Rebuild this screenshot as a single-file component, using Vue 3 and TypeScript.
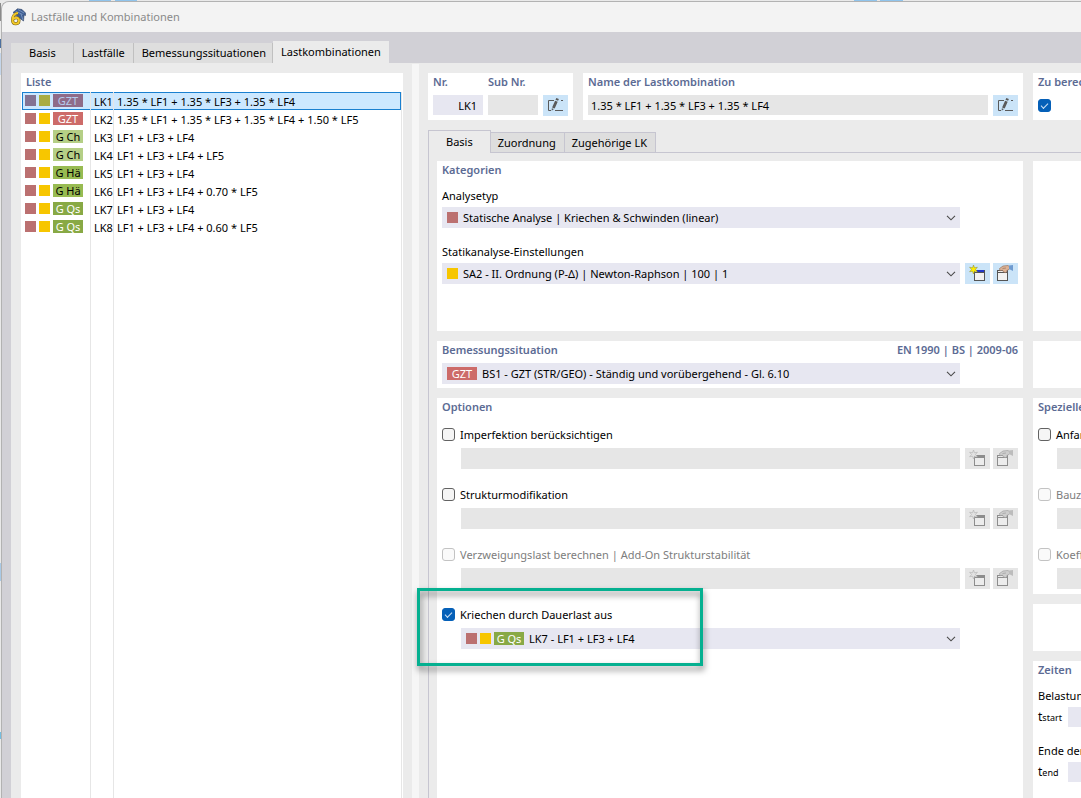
<script setup lang="ts">
import { ref } from 'vue'

interface Combo {
  id: string
  tag: string
  tone: string
  text: string
}

const combos: Combo[] = [
  { id: 'LK1', tag: 'GZT', tone: 'gzt', text: '1.35 * LF1 + 1.35 * LF3 + 1.35 * LF4' },
  { id: 'LK2', tag: 'GZT', tone: 'gzt', text: '1.35 * LF1 + 1.35 * LF3 + 1.35 * LF4 + 1.50 * LF5' },
  { id: 'LK3', tag: 'G Ch', tone: 'ch', text: 'LF1 + LF3 + LF4' },
  { id: 'LK4', tag: 'G Ch', tone: 'ch', text: 'LF1 + LF3 + LF4 + LF5' },
  { id: 'LK5', tag: 'G Hä', tone: 'ha', text: 'LF1 + LF3 + LF4' },
  { id: 'LK6', tag: 'G Hä', tone: 'ha', text: 'LF1 + LF3 + LF4 + 0.70 * LF5' },
  { id: 'LK7', tag: 'G Qs', tone: 'qs', text: 'LF1 + LF3 + LF4' },
  { id: 'LK8', tag: 'G Qs', tone: 'qs', text: 'LF1 + LF3 + LF4 + 0.60 * LF5' },
]
const selected = ref('LK1')

const mainTabs = ['Basis', 'Lastfälle', 'Bemessungssituationen', 'Lastkombinationen']
const mainTab = ref('Lastkombinationen')
const subTabs = ['Basis', 'Zuordnung', 'Zugehörige LK']
const subTab = ref('Basis')

const options = [
  { id: 'imperfektion', label: 'Imperfektion berücksichtigen', disabled: false },
  { id: 'struktur', label: 'Strukturmodifikation', disabled: false },
  { id: 'verzweigung', label: 'Verzweigungslast berechnen | Add-On Strukturstabilität', disabled: true },
]
const specials = [
  { id: 'anfang', label: 'Anfangszustand', disabled: false },
  { id: 'bau', label: 'Bauzustand', disabled: true },
  { id: 'koeff', label: 'Koeffizienten', disabled: true },
]
const compute = ref(true)
const creep = ref(true)
</script>

<template>
  <div class="desktop">
    <svg class="sprite" aria-hidden="true">
      <symbol id="i-edit" viewBox="0 0 25 21">
        <path d="M11 5.5H5.5v10H8M12 15.5h8M18 5.5h2" fill="none" stroke="#5a5a5a" />
        <path d="M13.3 3l2.6 1-.8 1.8-2.6-1zM12.1 5.8l2.6 1-3 6.6-2.6-1zM8.8 13.2l2.2.8-2.3 1.8z" fill="#5a5a5a" />
      </symbol>
      <symbol id="i-new" viewBox="0 0 25 21">
        <rect x="9.5" y="7.5" width="10" height="10" fill="#f2f2f2" stroke="#555" />
        <path d="M12 7h7v2h-7z" fill="#2438c8" />
        <path d="M9 9.500h11" stroke="#555" />
        <path d="M8.5 2l1 2.800 2.900-.6-1.900 2.300 1.900 2.300-2.900-.6-1 2.800-1-2.800-2.900.6 1.900-2.300-1.900-2.300 2.900.6z" fill="#ffee00" stroke="#8a8a30" stroke-width=".5" />
      </symbol>
      <symbol id="i-new-off" viewBox="0 0 25 21">
        <rect x="9.500" y="7.500" width="10" height="10" fill="#ececec" stroke="#8d8d8d" />
        <path d="M12 7h7v2h-7z" fill="#8d8d8d" />
        <path d="M9 9.500h11" stroke="#8d8d8d" />
        <path d="M8.5 2l1 2.800 2.900-.6-1.900 2.300 1.900 2.300-2.900-.6-1 2.800-1-2.800-2.900.6 1.900-2.300-1.900-2.300 2.900.6z" fill="#e2e2e2" stroke="#b0b0b0" stroke-width=".6" />
      </symbol>
      <symbol id="i-props" viewBox="0 0 25 21">
        <rect x="4.500" y="7.500" width="10" height="10" fill="#f2f2f2" stroke="#555" />
        <path d="M4 9.500h11" stroke="#555" />
        <path d="M6.500 5.500L10 3l5-.5 1.500 1V6L14 7.500l-1 2.200-2.500-.7-1-1.800-2.500.6z" fill="#dcb296" stroke="#8a6854" stroke-width=".6" />
        <path d="M9.500 5.500l3.500-.5" stroke="#8a6854" stroke-width=".6" />
        <path d="M16 2.500l4-.5v6l-4-2z" fill="#6f9bd0" />
      </symbol>
      <symbol id="i-props-off" viewBox="0 0 25 21">
        <rect x="4.500" y="7.500" width="10" height="10" fill="#ececec" stroke="#8d8d8d" />
        <path d="M4 9.500h11" stroke="#8d8d8d" />
        <path d="M6.500 5.500L10 3l5-.5 1.500 1V6L14 7.500l-1 2.200-2.500-.7-1-1.800-2.500.6z" fill="#cdcdcd" stroke="#959595" stroke-width=".6" />
        <path d="M9.500 5.500l3.500-.5" stroke="#959595" stroke-width=".6" />
        <path d="M16 2.500l4-.5v6l-4-2z" fill="#bdbdbd" />
      </symbol>
      <symbol id="i-chevron" viewBox="0 0 10 6">
        <path d="M1 .8l4 4 4-4" fill="none" stroke="#4a4a4a" stroke-width="1.100" />
      </symbol>
    </svg>

    <section class="dialog" aria-label="Lastfälle und Kombinationen">
      <header class="titlebar">
        <svg class="app-icon" viewBox="0 0 16 18" aria-hidden="true">
          <path d="M3 4.500L7.500.800 12 1.500l3.500 3.500v2.500l-1.500-.5-.5 6-4-3z" fill="#3f5f94" stroke="#2d4165" stroke-width=".6" />
          <path d="M5.500 3l7 3.500M8 1.500l6 3.500M11 6l2 6" stroke="#8aa5cc" stroke-width=".7" />
          <path d="M8 5C4.500 5.500 2.500 8.500 2.500 12c0 2.600 1.200 3.800 3.200 3.800s3.300-1.300 3.300-3.200-1.200-2.900-2.800-2.900c-1.200 0-2.300.6-3 1.700" fill="none" stroke="#6d5b1c" stroke-width="3" />
          <path d="M8 5C4.500 5.500 2.500 8.500 2.500 12c0 2.600 1.200 3.800 3.200 3.800s3.300-1.300 3.300-3.200-1.200-2.900-2.800-2.900c-1.200 0-2.300.6-3 1.700" fill="none" stroke="#f3c928" stroke-width="2" />
        </svg>
        <h1>Lastfälle und Kombinationen</h1>
      </header>

      <nav class="main-tabs">
        <button
          v-for="t in mainTabs"
          :key="t"
          type="button"
          :class="{ active: t === mainTab }"
          @click="mainTab = t"
        >{{ t }}</button>
      </nav>

      <div class="body">
        <aside class="list-panel">
          <h2>Liste</h2>
          <table class="list">
            <tbody>
              <tr
                v-for="c in combos"
                :key="c.id"
                :class="{ selected: c.id === selected }"
                @click="selected = c.id"
              >
                <td>
                  <span class="tags">
                    <i class="sw red"></i><i class="sw yellow"></i><span class="tag" :class="c.tone">{{ c.tag }}</span>
                  </span>
                </td>
                <td>{{ c.id }}</td>
                <td>{{ c.text }}</td>
              </tr>
              <tr class="rest"><td></td><td></td><td></td></tr>
            </tbody>
          </table>
        </aside>
        <div class="splitter"></div>

        <main class="detail">
          <div class="head">
            <section class="panel number">
              <div class="field">
                <label class="cap" for="nr">Nr.</label>
                <input id="nr" class="text right" value="LK1" />
              </div>
              <div class="field">
                <label class="cap" for="subnr">Sub Nr.</label>
                <input id="subnr" class="text grey" value="" readonly />
              </div>
              <button class="tool" type="button" aria-label="Nummer bearbeiten"><svg><use href="#i-edit" /></svg></button>
            </section>
            <section class="panel name">
              <div class="field">
                <label class="cap" for="name">Name der Lastkombination</label>
                <input id="name" class="text grey" value="1.35 * LF1 + 1.35 * LF3 + 1.35 * LF4" readonly />
              </div>
              <button class="tool" type="button" aria-label="Name bearbeiten"><svg><use href="#i-edit" /></svg></button>
            </section>
            <section class="panel calc">
              <label class="cap" for="calc">Zu berechnen</label>
              <input id="calc" v-model="compute" type="checkbox" />
            </section>
          </div>

          <nav class="sub-tabs">
            <button
              v-for="t in subTabs"
              :key="t"
              type="button"
              :class="{ active: t === subTab }"
              @click="subTab = t"
            >{{ t }}</button>
          </nav>

          <div class="pane">
            <div class="column wide">
              <section class="panel categories">
                <h2>Kategorien</h2>
                <label class="lbl" for="analysis">Analysetyp</label>
                <div class="row">
                  <div class="select">
                    <i class="sw red"></i>
                    <select id="analysis"><option>Statische Analyse | Kriechen &amp; Schwinden (linear)</option></select>
                    <svg class="chev"><use href="#i-chevron" /></svg>
                  </div>
                </div>
                <label class="lbl" for="settings">Statikanalyse-Einstellungen</label>
                <div class="row">
                  <div class="select">
                    <i class="sw yellow"></i>
                    <select id="settings"><option>SA2 - II. Ordnung (P-Δ) | Newton-Raphson | 100 | 1</option></select>
                    <svg class="chev"><use href="#i-chevron" /></svg>
                  </div>
                  <button class="tool" type="button" aria-label="Neu"><svg><use href="#i-new" /></svg></button>
                  <button class="tool" type="button" aria-label="Bearbeiten"><svg><use href="#i-props" /></svg></button>
                </div>
              </section>

              <section class="panel situation">
                <div class="title-row">
                  <h2><label for="situation">Bemessungssituation</label></h2>
                  <span class="cap">EN 1990 | BS | 2009-06</span>
                </div>
                <div class="row">
                  <div class="select">
                    <span class="tag gzt">GZT</span>
                    <select id="situation"><option>BS1 - GZT (STR/GEO) - Ständig und vorübergehend - Gl. 6.10</option></select>
                    <svg class="chev"><use href="#i-chevron" /></svg>
                  </div>
                </div>
              </section>

              <section class="panel options">
                <h2>Optionen</h2>
                <div v-for="o in options" :key="o.id" class="option">
                  <label class="check" :class="{ off: o.disabled }">
                    <input type="checkbox" :disabled="o.disabled" />{{ o.label }}
                  </label>
                  <div class="row indent">
                    <div class="select off"><select :aria-label="o.label" disabled></select></div>
                    <button class="tool off" type="button" aria-label="Neu" disabled><svg><use href="#i-new-off" /></svg></button>
                    <button class="tool off" type="button" aria-label="Bearbeiten" disabled><svg><use href="#i-props-off" /></svg></button>
                  </div>
                </div>
                <div class="option">
                  <label class="check"><input v-model="creep" type="checkbox" />Kriechen durch Dauerlast aus</label>
                  <div class="row indent">
                    <div class="select">
                      <i class="sw red"></i><i class="sw yellow"></i><span class="tag qs">G Qs</span>
                      <select aria-label="Kriechen durch Dauerlast aus"><option>LK7 - LF1 + LF3 + LF4</option></select>
                      <svg class="chev"><use href="#i-chevron" /></svg>
                    </div>
                  </div>
                  <div class="callout"></div>
                </div>
              </section>
            </div>

            <div class="column side">
              <section class="panel categories"></section>
              <section class="panel situation"></section>
              <section class="panel special">
                <h2>Spezielle Optionen</h2>
                <div v-for="s in specials" :key="s.id" class="option">
                  <label class="check" :class="{ off: s.disabled }">
                    <input type="checkbox" :disabled="s.disabled" />{{ s.label }}
                  </label>
                  <div class="row indent">
                    <div class="select off"><select :aria-label="s.label" disabled></select></div>
                  </div>
                </div>
              </section>
              <section class="panel situation"></section>
              <section class="panel times">
                <h2>Zeiten</h2>
                <label class="lbl" for="tstart">Belastungsbeginn</label>
                <div class="time"><span>t<small>start</small></span><input id="tstart" class="text" /></div>
                <label class="lbl" for="tend">Ende der Belastung</label>
                <div class="time"><span>t<small>end</small></span><input id="tend" class="text" /></div>
              </section>
            </div>
          </div>
        </main>
      </div>
    </section>
  </div>
</template>

<style>
body {
  margin: 0;
  overflow: hidden;
}
</style>

<style scoped>
* {
  box-sizing: border-box;
}
.desktop {
  height: 100vh;
  overflow: hidden;
  display: flex;
  padding: 1px 0 0 1px;
  font: 11px/18px "Noto Sans", "Open Sans", sans-serif;
  color: #000;
  background:
    linear-gradient(#90c4ec, #90c4ec) 89px 0 / 22px 2px no-repeat,
    linear-gradient(#90c4ec, #90c4ec) 115px 0 / 22px 2px no-repeat,
    linear-gradient(#90c4ec, #90c4ec) 854px 0 / 23px 2px no-repeat,
    linear-gradient(#90c4ec, #90c4ec) 880px 0 / 23px 2px no-repeat,
    linear-gradient(#8b8b8b, #8b8b8b) 0 3px / 1px 18px no-repeat,
    linear-gradient(#4d6f9f, #4d6f9f) 0 39px / 2px 9px no-repeat,
    linear-gradient(#c4d5ea, #c4d5ea) 0 53px / 2px 22px no-repeat,
    linear-gradient(#a9c9e6, #a9c9e6) 0 563px / 2px 18px no-repeat,
    linear-gradient(#74bde0, #74bde0) 0 732px / 2px 7px no-repeat,
    #e9e9e9;
}
.sprite {
  display: none;
}
.dialog {
  flex: 1 0 auto;
  width: calc(100% + 150px);
  display: flex;
  flex-direction: column;
  overflow: hidden;
  border: solid #b2b2b2;
  border-width: 1px 0 0 1px;
  border-radius: 8px 0 0 0;
  background: #d1d0d6;
}
.titlebar {
  height: 30px;
  display: flex;
  align-items: center;
  gap: 5px;
  padding-left: 8px;
  background: #f3f3f3;
}
.app-icon {
  width: 16px;
  height: 18px;
}
h1 {
  margin: 0;
  font-size: 11px;
  font-weight: 400;
  color: #8a8a8a;
}
h2,
.cap {
  display: block;
  margin: 0;
  font-size: 11px;
  line-height: 18px;
  font-weight: 600;
  color: #5c6b94;
  white-space: nowrap;
}
button,
input,
select {
  font: inherit;
  color: inherit;
  margin: 0;
  padding: 0;
  border: 0;
  border-radius: 0;
}
.main-tabs {
  height: 31px;
  display: flex;
  align-items: flex-end;
  padding-left: 9px;
}
.main-tabs button {
  height: 20px;
  padding: 0 8px;
  background: #dedede;
  border-right: 1px solid #c0c0c0;
}
.main-tabs button:first-child {
  padding: 0 17px 0 18px;
}
.main-tabs button:nth-child(3) {
  padding: 0 6px 0 8px;
}
.main-tabs button.active {
  height: 22px;
  padding: 0 8px;
  background: #ebebeb;
  border: 0;
}
.body {
  flex: 1;
  min-height: 0;
  display: flex;
  margin-left: 9px;
  background: #ebebeb;
}
.list-panel {
  width: 382px;
  flex: none;
  display: flex;
  flex-direction: column;
  margin: 10px 9px 0 10px;
  padding: 0 1px;
  background: #fff;
}
.list-panel h2 {
  padding-left: 4px;
}
.list {
  flex: 1;
  display: flex;
  flex-direction: column;
  border-right: 1px solid #e6e6e6;
  margin-top: 1px;
}
.list tbody {
  flex: 1;
  display: flex;
  flex-direction: column;
}
.list tr {
  display: grid;
  grid-template-columns: 69px 23px 1fr;
  height: 18px;
}
.list tr.rest {
  flex: 1;
}
.list td {
  padding: 0 0 0 3px;
  border-right: 1px solid #e6e6e6;
  line-height: 20px;
  height: 18px;
  white-space: nowrap;
}
.list .rest td {
  height: auto;
}
.list td:last-child {
  border: 0;
}
.list tr.selected {
  background: #cce8ff;
  box-shadow: inset 0 0 0 1px #1a80d0;
}
.tags {
  height: 16px;
  display: flex;
  align-items: center;
  gap: 3px;
}
.sw {
  width: 11px;
  height: 11px;
  flex: none;
}
.red {
  background: #bb7070;
}
.yellow {
  background: #f7c600;
}
.tag {
  width: 30px;
  height: 13px;
  flex: none;
  line-height: 13px;
  text-align: center;
}
.gzt {
  background: #cd6b69;
  color: #fff;
}
.ch {
  background: #b5cf86;
}
.ha {
  background: #98bb52;
}
.qs {
  background: #88a945;
  color: #fff;
}
.selected .red {
  background: #837393;
}
.selected .yellow {
  background: #a9ac43;
}
.selected .gzt {
  background: #8f6c89;
  color: #b4cdee;
}
.splitter {
  width: 7px;
  flex: none;
  margin-top: 1px;
  background: #f6f6f6;
}
.detail {
  flex: 1;
  min-width: 0;
  display: flex;
  flex-direction: column;
  padding: 10px 0 0 9px;
}
.panel {
  padding: 0 5px;
  background: #fff;
}
.head {
  display: flex;
  gap: 10px;
}
.head .panel {
  height: 47px;
  display: flex;
  align-items: flex-start;
  gap: 5px;
}
.number {
  width: 145px;
}
.number .field {
  width: 50px;
}
.name {
  flex: 1;
}
.name .field {
  flex: 1;
}
.head .tool {
  margin-top: 22px;
}
.head .calc {
  width: 198px;
  flex-direction: column;
  gap: 8px;
}
.text {
  display: block;
  width: 100%;
  height: 20px;
  padding: 0 3px;
  background: #e7e7f1;
}
.field .text {
  margin-top: 4px;
}
.text.grey {
  background: #e6e6e6;
}
.text.right {
  text-align: right;
  padding-right: 6px;
}
.tool {
  width: 25px;
  height: 21px;
  flex: none;
  background: #cbe4f8;
}
.tool svg {
  display: block;
  width: 25px;
  height: 21px;
}
.tool.off {
  background: #e6e6e6;
}
input[type='checkbox'] {
  appearance: none;
  width: 13px;
  height: 13px;
  flex: none;
  border: 1px solid #626262;
  border-radius: 3px;
  background: #f5f5f5;
}
input[type='checkbox']:disabled {
  border-color: #c3c3c3;
  background: #fafafa;
}
input[type='checkbox']:checked {
  border-color: #0560b8;
  background: #0560b8;
  display: grid;
  place-items: center;
}
input[type='checkbox']:checked::before {
  content: '';
  width: 6px;
  height: 3px;
  border: solid #cfe3f6;
  border-width: 0 0 1px 1px;
  transform: translateY(-1px) rotate(-45deg);
}
.sub-tabs {
  display: flex;
  align-items: flex-end;
  height: 23px;
  margin-top: 10px;
  border-bottom: 1px solid #c6c5d0;
}
.sub-tabs button {
  height: 20px;
  padding: 0 8px 0 7px;
  background: #dedede;
  border: 1px solid #c6c5d0;
  border-left: 0;
  border-bottom: 0;
}
.sub-tabs button.active {
  height: 23px;
  padding: 0 17px;
  margin-bottom: -1px;
  background: #ebebeb;
  border-left: 1px solid #c6c5d0;
}
.pane {
  flex: 1;
  min-height: 0;
  display: flex;
  gap: 10px;
  padding: 8px 0 0 8px;
  border-left: 1px solid #c6c5d0;
}
.column {
  display: flex;
  flex-direction: column;
  gap: 10px;
}
.wide {
  flex: 1;
}
.side {
  width: 198px;
}
.categories {
  height: 170px;
}
.situation {
  height: 47px;
}
.options,
.times {
  flex: 1;
}
.special {
  padding-bottom: 5px;
}
.title-row {
  display: flex;
  justify-content: space-between;
}
.situation .row {
  margin-top: 4px;
}
.lbl {
  display: block;
  margin-top: 8px;
  padding-bottom: 2px;
  white-space: nowrap;
}
.row + .lbl {
  margin-top: 15px;
}
.row {
  display: grid;
  grid-template-columns: 1fr 25px 25px;
  column-gap: 3px;
}
.row .select {
  margin-right: 2px;
}
.side .row {
  grid-template-columns: 1fr;
}
.indent {
  margin-left: 19px;
}
.select {
  height: 21px;
  display: flex;
  align-items: center;
  gap: 3px;
  padding: 0 4px 0 5px;
  background: #e7e7f1;
}
.select.off {
  background: #e6e6e6;
}
.select select {
  appearance: none;
  flex: 1;
  min-width: 0;
  height: 21px;
  padding-left: 2px;
  background: transparent;
}
.chev {
  width: 10px;
  height: 6px;
}
.option {
  position: relative;
  height: 60px;
  padding-top: 10px;
}
.special .option:last-child {
  height: 53px;
}
.check {
  display: flex;
  align-items: center;
  gap: 5px;
  height: 18px;
  margin-bottom: 4px;
  white-space: nowrap;
}
.check input {
  margin-bottom: 1px;
}
.off {
  color: #7d7d7d;
}
.callout {
  position: absolute;
  left: -25px;
  top: -8px;
  width: 286px;
  height: 78px;
  border: 3px solid #05b090;
  filter: drop-shadow(1px 4px 3px rgb(0 0 0 / 50%));
  pointer-events: none;
}
.time {
  display: flex;
  align-items: center;
  height: 20px;
  margin-bottom: 15px;
}
.time span {
  width: 30px;
  flex: none;
  font-size: 12px;
}
.time small {
  font-size: 9px;
}
.time + .lbl {
  margin-top: 0;
}
</style>
